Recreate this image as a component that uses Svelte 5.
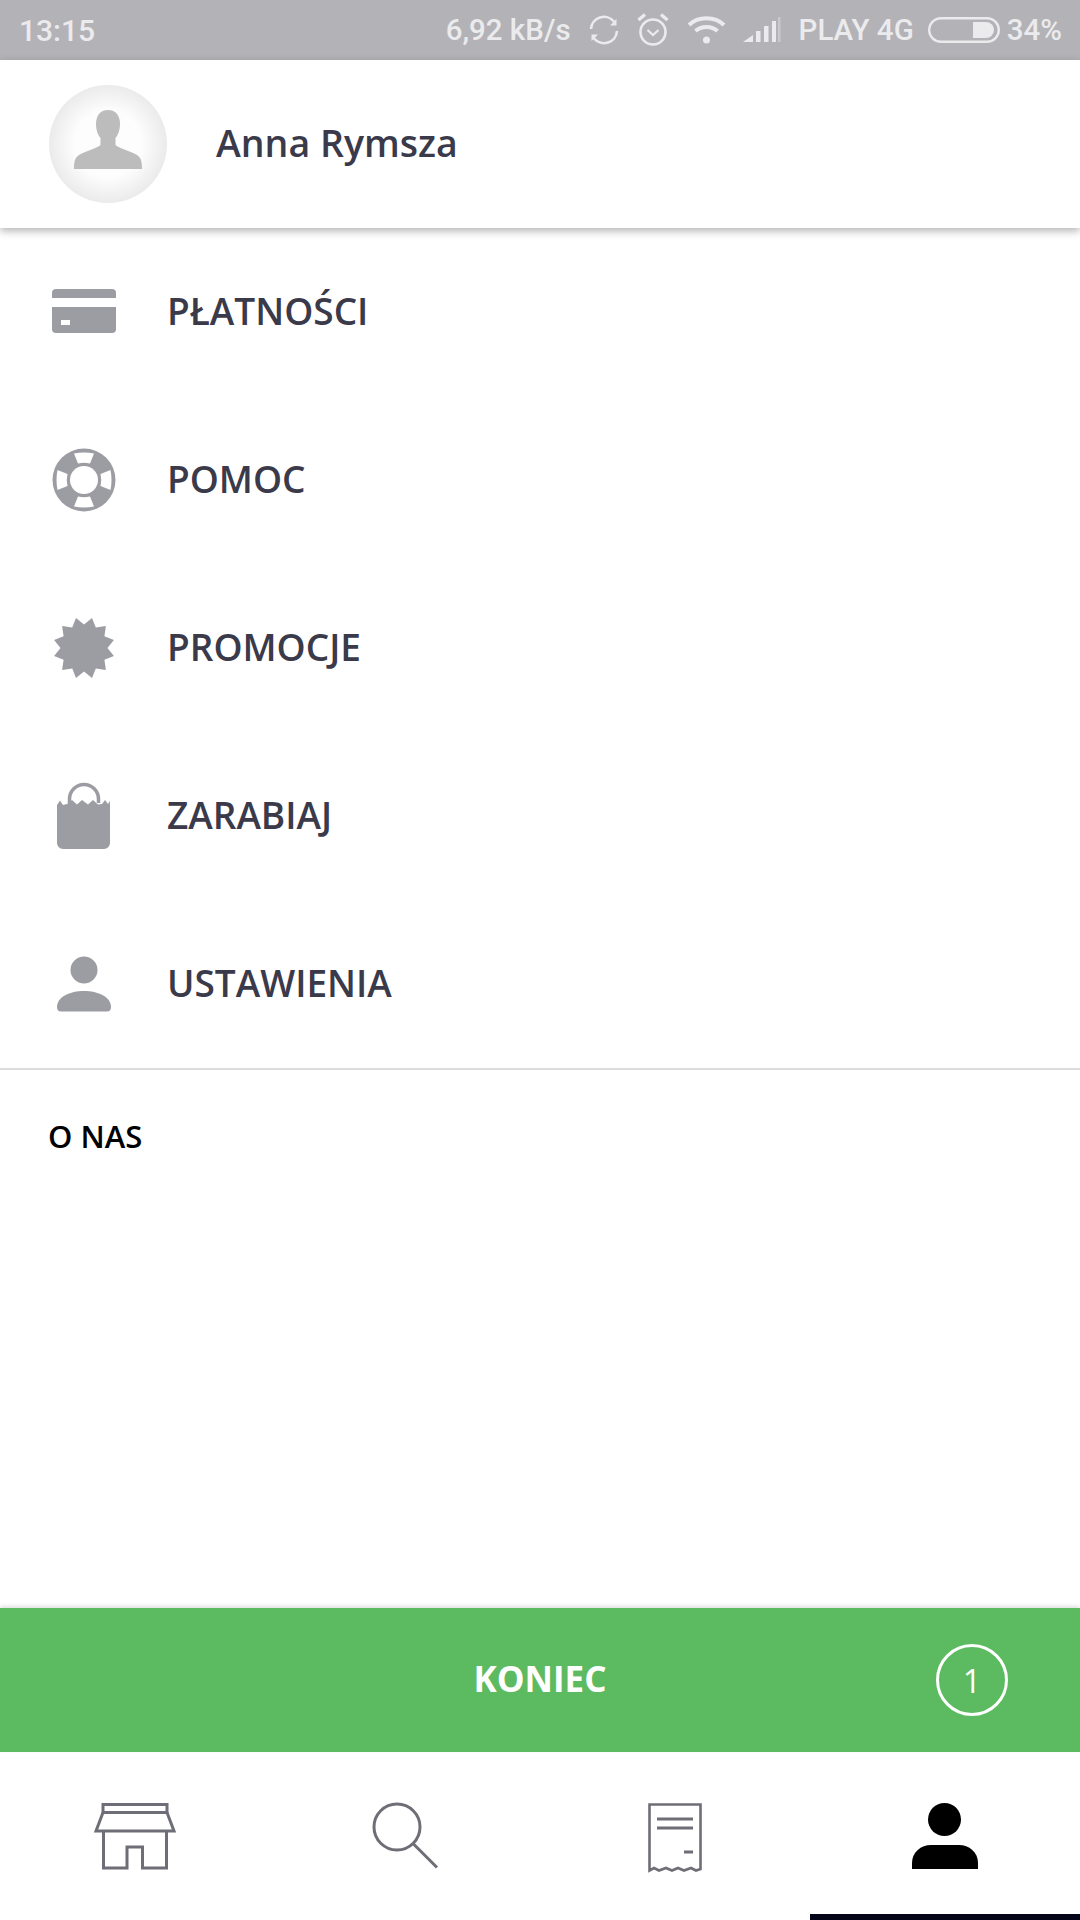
<script>
  const menu = ['PŁATNOŚCI', 'POMOC', 'PROMOCJE', 'ZARABIAJ', 'USTAWIENIA'];

  // 12 pointed promo badge
  const starPoints = Array.from({ length: 24 }, (_, i) => {
    const angle = ((i * 15 - 75) * Math.PI) / 180;
    const r = i % 2 ? 23.5 : 31;
    return `${(32 + r * Math.cos(angle)).toFixed(1)},${(32 + r * Math.sin(angle)).toFixed(1)}`;
  }).join(' ');
</script>

<div class="screen">
  <div class="status">
    <span class="time">13:15</span>
    <div class="status-right">
      <span>6,92 kB/s</span>
      <svg width="30" height="32" viewBox="0 0 30 32" fill="none" stroke="#ebebed" stroke-width="2.6">
        <path d="M2 15A13 13 0 0 1 25 7.600" />
        <path d="M28 17A13 13 0 0 1 5 24.400" />
        <path d="M27.500 5V11.500H21ZM2.500 27V20.500H9Z" fill="#ebebed" stroke="none" />
      </svg>
      <svg width="32" height="36" viewBox="0 0 32 36" fill="none" stroke="#ebebed" stroke-width="2.6">
        <circle cx="16" cy="20" r="12.500" />
        <path d="M10.500 18l5.500 5 5.500-5" stroke-width="2.200" />
        <path d="M1.500 8L8 2.500M30.500 8L24 2.500" stroke-width="3.400" />
      </svg>
      <svg width="39" height="30" viewBox="0 0 39 30" fill="none" stroke="#ebebed" stroke-width="4">
        <path d="M2 10C11 1 28 1 37 10" />
        <path d="M8.500 16C14 10.500 25 10.500 30.500 16" />
        <circle cx="19.500" cy="25" r="3.500" fill="#ebebed" stroke="none" />
      </svg>
      <svg class="signal" width="38" height="26" viewBox="0 0 38 26" fill="#ebebed">
        <path d="M0 25L10 18V25Z" />
        <rect x="13" y="14" width="4.500" height="11" />
        <rect x="21" y="9" width="4.500" height="16" />
        <rect x="29" y="4" width="4" height="21" />
        <rect x="35" y="0" width="2.500" height="25" opacity=".4" />
      </svg>
      <span>PLAY 4G</span>
      <svg class="battery" width="72" height="26" viewBox="0 0 72 26">
        <rect x="1.200" y="1.200" width="69.600" height="23.600" rx="11.800" fill="none" stroke="#ebebed" stroke-width="2.400" />
        <path d="M45 5H58A8 8 0 0 1 66 13A8 8 0 0 1 58 21H45Z" fill="#ebebed" />
      </svg>
      <span class="percent">34%</span>
    </div>
  </div>

  <header class="profile">
    <div class="avatar">
      <svg width="68" height="59" viewBox="0 0 68 59">
        <path d="M34 0C26 0 22 6 22 14C22 20 24 25 26.500 28V35C23 38 10 42 5 45C1.500 47.500 0 50 0 59H68C68 50 66.500 47.500 63 45C58 42 45 38 41.500 35V28C44 25 46 20 46 14C46 6 42 0 34 0Z" fill="#bcbcbc" />
      </svg>
    </div>
    <span class="name">Anna Rymsza</span>
  </header>

  <main class="content">
    <ul class="menu">
      {#each menu as label, i}
        <li class="menu-row">
          <svg class="menu-icon" width="64" height="72" viewBox="0 -4 64 72">
            {#if i === 0}
              <path d="M0 18V13a4 4 0 0 1 4-4H60a4 4 0 0 1 4 4V18Z" />
              <path d="M0 27H64V49a4 4 0 0 1-4 4H4a4 4 0 0 1-4-4Z" />
              <rect x="9" y="40" width="9" height="5" fill="#fff" />
            {:else if i === 1}
              <circle cx="32" cy="32" r="31.500" />
              <circle cx="32" cy="32" r="14" fill="#fff" />
              {#each [0, 90, 180, 270] as turn}
                <path
                  d="M22 5.500Q32 3.500 42 5.500L38 15.500Q32 14 26 15.500Z"
                  fill="#fff"
                  transform="rotate({turn} 32 32)"
                />
              {/each}
            {:else if i === 2}
              <polygon points={starPoints} />
            {:else if i === 3}
              <path d="M5 21L8 16.500L11 21L15 20L20 16L25 20.500L30 16L36 20.500L41 16L46 20.500L50 20L53 16L56 20L58 17V59a6 6 0 0 1-6 6H11a6 6 0 0 1-6-6Z" />
              <path d="M17.500 19V15a14 14 0 0 1 29 0V19" fill="none" stroke="#9c9ca3" stroke-width="3.500" />
            {:else}
              <circle cx="32" cy="18" r="13.500" />
              <path d="M5 55C5 45 18 39 32 39C46 39 59 45 59 55C59 58 57.500 59.500 55 59.500H9C6.500 59.500 5 58 5 55Z" />
            {/if}
          </svg>
          <span>{label}</span>
        </li>
      {/each}
    </ul>
    <div class="about">O NAS</div>
  </main>

  <div class="finish">
    <span class="finish-label">KONIEC</span>
    <span class="count">1</span>
  </div>

  <nav class="tabs">
    <div class="tab">
      <svg width="82" height="72" viewBox="0 0 82 72" fill="none" stroke="#6e6e76" stroke-width="3">
        <path d="M9 4.500H73V12.500H9Z" />
        <path d="M9 12.500L2 31H80L73 12.500" />
        <path d="M9.500 31V68H33V47H48.500V68H72.500V31" />
      </svg>
    </div>
    <div class="tab">
      <svg width="82" height="72" viewBox="0 0 82 72" fill="none" stroke="#6e6e76" stroke-width="3">
        <circle cx="33" cy="27" r="23" />
        <path d="M49.500 44L73 67.500" />
      </svg>
    </div>
    <div class="tab">
      <svg width="82" height="72" viewBox="0 0 82 72" fill="none" stroke="#6e6e76" stroke-width="3">
        <path d="M15.500 4.500H66.500V69L62 70.500L57 68L50 70.500L44 68L38 70.500L32 68L25 70.500L20 68L15.500 70.500Z" stroke-width="2.600" />
        <path d="M23 19H59M23 28H59M50 52H59" />
      </svg>
    </div>
    <div class="tab active">
      <svg width="82" height="72" viewBox="0 0 82 72">
        <circle cx="40.500" cy="19.500" r="16.500" />
        <path d="M8 69V63C8 52 17 45 27 45H55C65 45 74 52 74 63V69Z" />
      </svg>
    </div>
  </nav>
</div>

<style>
  :global(body) {
    background: #fff;
  }

  .screen {
    width: 1080px;
    height: 1920px;
    display: flex;
    flex-direction: column;
    overflow: hidden;
    font-family: 'Open Sans', sans-serif;
    background: #fff;
  }

  .status {
    height: 60px;
    flex: none;
    display: flex;
    align-items: center;
    justify-content: space-between;
    padding: 0 18px 0 19px;
    background: #b3b2b7;
    color: #ebebed;
    font-family: Roboto, sans-serif;
    font-weight: 500;
    font-size: 29.500px;
  }

  .time {
    font-size: 30px;
  }

  .status-right {
    display: flex;
    align-items: center;
    gap: 18px;
  }

  .signal {
    margin-left: -1px;
  }

  .battery {
    margin-left: -4px;
  }

  .percent {
    margin-left: -11px;
  }

  .profile {
    height: 168px;
    flex: none;
    display: flex;
    align-items: center;
    gap: 49px;
    padding-left: 49px;
    box-shadow: 0 3px 8px rgb(0 0 0 / 30%);
    position: relative;
    z-index: 1;
    background: #fff;
  }

  .avatar {
    width: 118px;
    height: 118px;
    border-radius: 50%;
    display: flex;
    justify-content: center;
    padding-top: 25px;
    box-sizing: border-box;
    background: radial-gradient(circle, #fdfdfd 40%, #d9d9d9 100%);
  }

  .name {
    font-size: 37.500px;
    font-weight: 600;
    color: #3a3a4a;
    padding-bottom: 4px;
  }

  .content {
    flex: 1;
  }

  .menu {
    list-style: none;
    margin: 0;
    padding: 0;
    border-bottom: 2px solid #dcdcdc;
  }

  .menu-row {
    height: 168px;
    display: flex;
    align-items: center;
    gap: 51px;
    padding-left: 52px;
    font-size: 37px;
    font-weight: 600;
    color: #3a3a4a;
  }

  .menu-row span {
    padding-bottom: 4px;
  }

  .menu-icon {
    fill: #9c9ca3;
    overflow: visible;
  }

  .about {
    padding: 45px 0 0 48px;
    font-size: 31px;
    font-weight: 600;
    color: #000;
  }

  .finish {
    height: 144px;
    flex: none;
    display: flex;
    align-items: center;
    justify-content: center;
    position: relative;
    background: #5cbb60;
    box-shadow: 0 -2px 4px rgb(0 0 0 / 12%);
    color: #fff;
  }

  .finish-label {
    font-size: 35px;
    font-weight: 700;
    padding-bottom: 3px;
  }

  .count {
    position: absolute;
    right: 72px;
    top: 36px;
    width: 72px;
    height: 72px;
    box-sizing: border-box;
    border: 3px solid #fff;
    border-radius: 50%;
    display: flex;
    align-items: center;
    justify-content: center;
    font-size: 32px;
    font-weight: 400;
  }

  .tabs {
    height: 168px;
    flex: none;
    display: grid;
    grid-template-columns: repeat(4, 1fr);
  }

  .tab {
    display: flex;
    align-items: center;
    justify-content: center;
  }

  .tab svg {
    overflow: visible;
  }

  .tab.active {
    box-shadow: inset 0 -6px 0 #05051a;
  }
</style>
